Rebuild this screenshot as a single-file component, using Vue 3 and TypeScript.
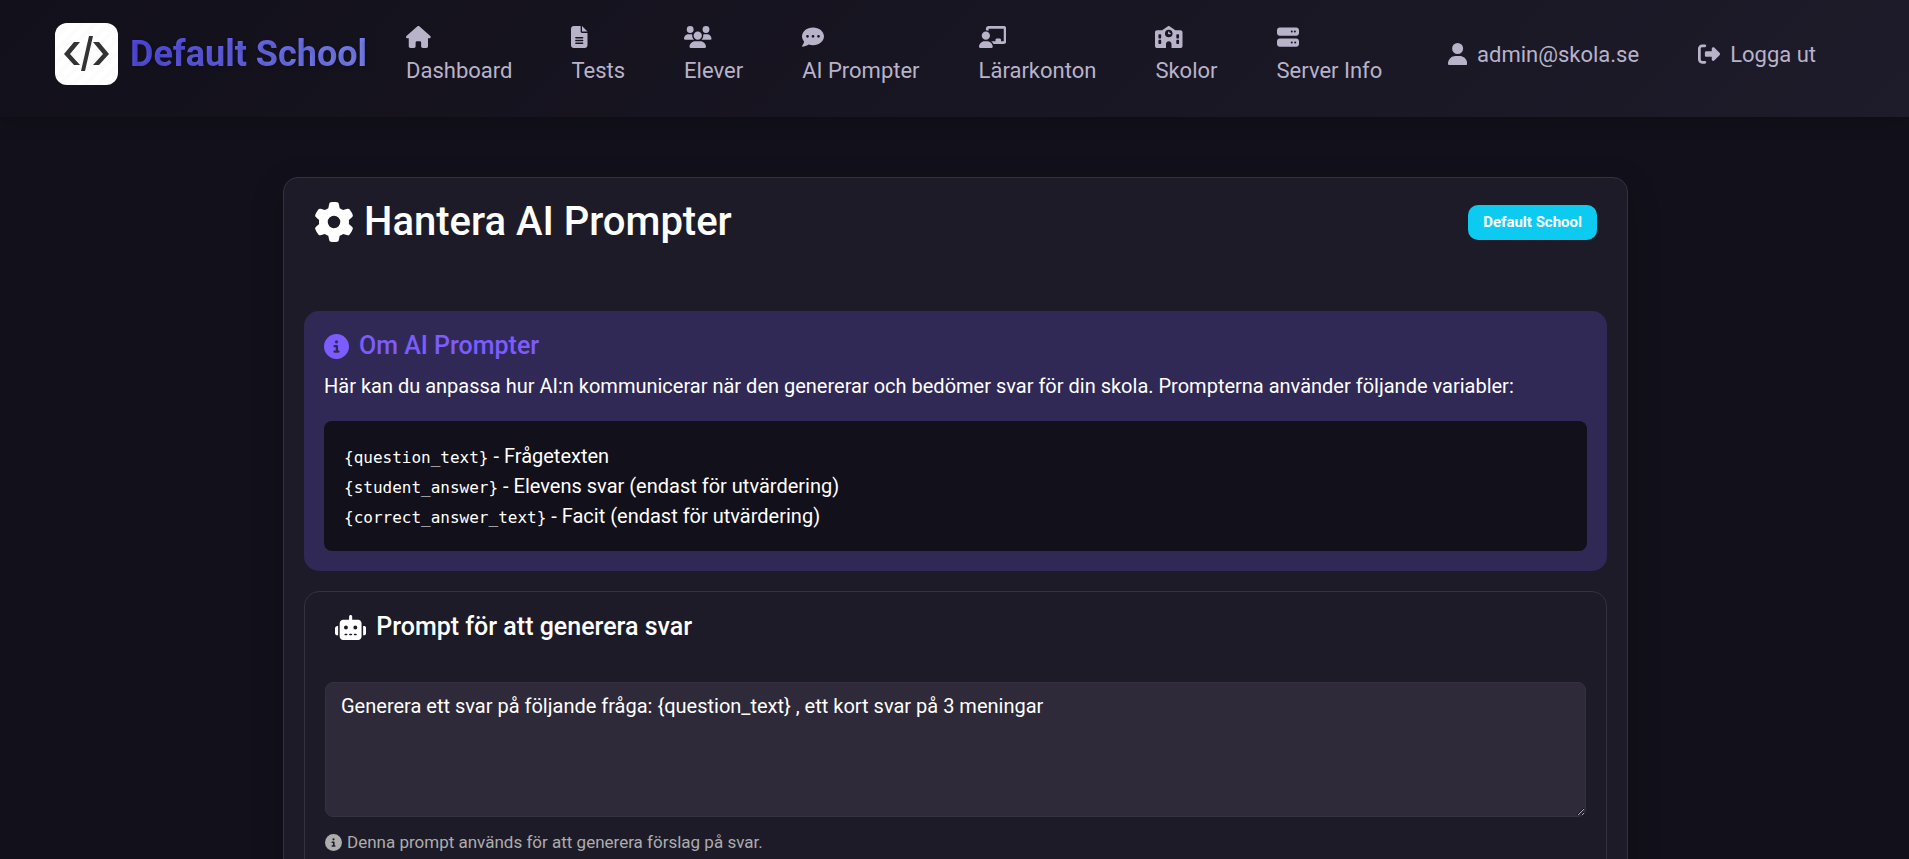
<script setup lang="ts">
import { ref } from 'vue'

interface Icon {
  width: number
  path: string
}

interface NavItem {
  label: string
  icon: Icon
}

interface PromptVariable {
  name: string
  description: string
}

const icons: Record<string, Icon> = {
  house: {
    width: 576,
    path: 'M575.8 255.5c0 18-15 32.1-32 32.1l-32 0 .7 160.2c0 2.7-.2 5.4-.5 8.1l0 16.2c0 22.1-17.9 40-40 40l-16 0c-1.1 0-2.2 0-3.3-.1c-1.4 .1-2.8 .1-4.2 .1L416 512l-24 0c-22.1 0-40-17.9-40-40l0-24 0-64c0-17.7-14.3-32-32-32l-64 0c-17.7 0-32 14.3-32 32l0 64 0 24c0 22.1-17.9 40-40 40l-24 0-31.9 0c-1.5 0-3-.1-4.5-.2c-1.2 .1-2.4 .2-3.6 .2l-16 0c-22.1 0-40-17.9-40-40l0-112c0-.9 0-1.9 .1-2.8l0-69.7-32 0c-18 0-32-14-32-32.1c0-9 3-17 10-24L266.4 8c7-7 15-8 22-8s15 2 21 7L564.8 231.5c8 7 12 15 11 24z',
  },
  file: {
    width: 384,
    path: 'M64 0C28.7 0 0 28.7 0 64L0 448c0 35.3 28.7 64 64 64l256 0c35.3 0 64-28.7 64-64l0-288-128 0c-17.7 0-32-14.3-32-32L224 0 64 0zM256 0l0 128 128 0L256 0zM112 256l160 0c8.8 0 16 7.2 16 16s-7.2 16-16 16l-160 0c-8.8 0-16-7.2-16-16s7.2-16 16-16zm0 64l160 0c8.8 0 16 7.2 16 16s-7.2 16-16 16l-160 0c-8.8 0-16-7.2-16-16s7.2-16 16-16zm0 64l160 0c8.8 0 16 7.2 16 16s-7.2 16-16 16l-160 0c-8.8 0-16-7.2-16-16s7.2-16 16-16z',
  },
  users: {
    width: 640,
    path: 'M144 0a80 80 0 1 1 0 160A80 80 0 1 1 144 0zM512 0a80 80 0 1 1 0 160A80 80 0 1 1 512 0zM0 298.7C0 239.8 47.8 192 106.7 192l42.7 0c15.9 0 31 3.5 44.6 9.7c-1.3 7.2-1.9 14.7-1.9 22.3c0 38.2 16.8 72.5 43.3 96c-.2 0-.4 0-.7 0L21.3 320C9.6 320 0 310.4 0 298.7zM405.3 320c-.2 0-.4 0-.7 0c26.6-23.5 43.3-57.8 43.3-96c0-7.6-.7-15-1.9-22.3c13.6-6.3 28.7-9.7 44.6-9.7l42.7 0C592.2 192 640 239.8 640 298.7c0 11.8-9.6 21.3-21.3 21.3l-213.3 0zM224 224a96 96 0 1 1 192 0 96 96 0 1 1 -192 0zM128 485.3C128 411.7 187.7 352 261.3 352l117.3 0C452.3 352 512 411.7 512 485.3c0 14.7-11.9 26.7-26.7 26.7l-330.7 0c-14.7 0-26.7-11.9-26.7-26.7z',
  },
  comment: {
    width: 512,
    path: 'M256 448c141.4 0 256-93.1 256-208S397.4 32 256 32S0 125.1 0 240c0 45.1 17.7 86.8 47.7 120.9c-1.9 24.5-11.4 46.3-21.4 62.9c-5.5 9.2-11.1 16.6-15.2 21.6c-2.1 2.5-3.7 4.4-4.9 5.7c-.6 .6-1 1.1-1.3 1.4l-.3 .3c-4.6 4.6-5.9 11.4-3.4 17.4c2.5 6 8.3 9.9 14.8 9.9c28.7 0 57.6-8.9 81.6-19.3c22.9-10 42.4-21.9 54.3-30.6c31.8 11.5 67 17.9 104.1 17.9zM128 208a32 32 0 1 1 0 64 32 32 0 1 1 0-64zm128 0a32 32 0 1 1 0 64 32 32 0 1 1 0-64zm96 32a32 32 0 1 1 64 0 32 32 0 1 1 -64 0z',
  },
  teacher: {
    width: 640,
    path: 'M160 64c0-35.3 28.7-64 64-64L576 0c35.3 0 64 28.7 64 64l0 288c0 35.3-28.7 64-64 64l-239.2 0c-11.8-25.5-29.9-47.5-52.4-64l99.6 0 0-32c0-17.7 14.3-32 32-32l64 0c17.7 0 32 14.3 32 32l0 32 64 0 0-288L224 64l0 49.1C205.2 102.2 183.3 96 160 96l0-32zm0 64a96 96 0 1 1 0 192 96 96 0 1 1 0-192zM133.3 352l53.3 0C260.3 352 320 411.7 320 485.3c0 14.7-11.9 26.7-26.7 26.7L26.7 512C11.9 512 0 500.1 0 485.3C0 411.7 59.7 352 133.3 352z',
  },
  school: {
    width: 640,
    path: 'M337.8 5.4C327-1.8 313-1.8 302.2 5.4L166.3 96 48 96C21.5 96 0 117.5 0 144L0 464c0 26.5 21.5 48 48 48l208 0 0-96c0-35.3 28.7-64 64-64s64 28.7 64 64l0 96 208 0c26.5 0 48-21.5 48-48l0-320c0-26.5-21.5-48-48-48L473.7 96 337.8 5.4zM96 192l32 0c8.8 0 16 7.2 16 16l0 64c0 8.8-7.2 16-16 16l-32 0c-8.8 0-16-7.2-16-16l0-64c0-8.8 7.2-16 16-16zm400 16c0-8.8 7.2-16 16-16l32 0c8.8 0 16 7.2 16 16l0 64c0 8.8-7.2 16-16 16l-32 0c-8.8 0-16-7.2-16-16l0-64zM96 320l32 0c8.8 0 16 7.2 16 16l0 64c0 8.8-7.2 16-16 16l-32 0c-8.8 0-16-7.2-16-16l0-64c0-8.8 7.2-16 16-16zm400 16c0-8.8 7.2-16 16-16l32 0c8.8 0 16 7.2 16 16l0 64c0 8.8-7.2 16-16 16l-32 0c-8.8 0-16-7.2-16-16l0-64zM232 176a88 88 0 1 1 176 0 88 88 0 1 1 -176 0zm88-48c-8.8 0-16 7.2-16 16l0 32c0 8.8 7.2 16 16 16l32 0c8.8 0 16-7.2 16-16s-7.2-16-16-16l-16 0 0-16c0-8.8-7.2-16-16-16z',
  },
  server: {
    width: 512,
    path: 'M64 32C28.7 32 0 60.7 0 96l0 64c0 35.3 28.7 64 64 64l384 0c35.3 0 64-28.7 64-64l0-64c0-35.3-28.7-64-64-64L64 32zm280 72a24 24 0 1 1 0 48 24 24 0 1 1 0-48zm48 24a24 24 0 1 1 48 0 24 24 0 1 1 -48 0zM64 288c-35.3 0-64 28.7-64 64l0 64c0 35.3 28.7 64 64 64l384 0c35.3 0 64-28.7 64-64l0-64c0-35.3-28.7-64-64-64L64 288zm280 72a24 24 0 1 1 0 48 24 24 0 1 1 0-48zm56 24a24 24 0 1 1 48 0 24 24 0 1 1 -48 0z',
  },
  user: {
    width: 448,
    path: 'M224 256A128 128 0 1 0 224 0a128 128 0 1 0 0 256zm-45.7 48C79.8 304 0 383.8 0 482.3C0 498.7 13.3 512 29.7 512l388.6 0c16.4 0 29.7-13.3 29.7-29.7C448 383.8 368.2 304 269.7 304l-91.4 0z',
  },
  logout: {
    width: 512,
    path: 'M377.9 105.9L500.7 228.7c7.2 7.2 11.3 17.1 11.3 27.3s-4.1 20.1-11.3 27.3L377.9 406.1c-6.4 6.4-15 9.9-24 9.9c-18.7 0-33.9-15.2-33.9-33.9l0-62.1-128 0c-17.7 0-32-14.3-32-32l0-64c0-17.7 14.3-32 32-32l128 0 0-62.1c0-18.7 15.2-33.9 33.9-33.9c9 0 17.6 3.6 24 9.9zM160 96L96 96c-17.7 0-32 14.3-32 32l0 256c0 17.7 14.3 32 32 32l64 0c17.7 0 32 14.3 32 32s-14.3 32-32 32l-64 0c-53 0-96-43-96-96L0 128C0 75 43 32 96 32l64 0c17.7 0 32 14.3 32 32s-14.3 32-32 32z',
  },
  gear: {
    width: 512,
    path: 'M495.9 166.6c3.2 8.7 .5 18.4-6.4 24.6l-43.3 39.4c1.1 8.3 1.7 16.8 1.7 25.4s-.6 17.1-1.7 25.4l43.3 39.4c6.9 6.2 9.6 15.9 6.4 24.6c-4.4 11.9-9.7 23.3-15.8 34.3l-4.7 8.1c-6.6 11-14 21.4-22.1 31.2c-5.9 7.2-15.7 9.6-24.5 6.8l-55.7-17.7c-13.4 10.3-28.2 18.9-44 25.4l-12.5 57.1c-2 9.1-9 16.3-18.2 17.8c-13.8 2.3-28 3.5-42.5 3.5s-28.7-1.2-42.5-3.5c-9.2-1.5-16.2-8.7-18.2-17.8l-12.5-57.1c-15.8-6.5-30.6-15.1-44-25.4L83.1 425.9c-8.8 2.8-18.6 .3-24.5-6.8c-8.1-9.8-15.5-20.2-22.1-31.2l-4.7-8.1c-6.1-11-11.4-22.4-15.8-34.3c-3.2-8.7-.5-18.4 6.4-24.6l43.3-39.4C64.6 273.1 64 264.6 64 256s.6-17.1 1.7-25.4L22.4 191.2c-6.9-6.2-9.6-15.9-6.4-24.6c4.4-11.9 9.7-23.3 15.8-34.3l4.7-8.1c6.6-11 14-21.4 22.1-31.2c5.9-7.2 15.7-9.6 24.5-6.8l55.7 17.7c13.4-10.3 28.2-18.9 44-25.4l12.5-57.1c2-9.1 9-16.3 18.2-17.8C227.3 1.2 241.5 0 256 0s28.7 1.2 42.5 3.5c9.2 1.5 16.2 8.7 18.2 17.8l12.5 57.1c15.8 6.5 30.6 15.1 44 25.4l55.7-17.7c8.8-2.8 18.6-.3 24.5 6.8c8.1 9.8 15.5 20.2 22.1 31.2l4.7 8.1c6.1 11 11.4 22.4 15.8 34.3zM256 336a80 80 0 1 0 0-160 80 80 0 1 0 0 160z',
  },
  info: {
    width: 512,
    path: 'M256 512A256 256 0 1 0 256 0a256 256 0 1 0 0 512zM216 336l24 0 0-64-24 0c-13.3 0-24-10.7-24-24s10.7-24 24-24l48 0c13.3 0 24 10.7 24 24l0 88 8 0c13.3 0 24 10.7 24 24s-10.7 24-24 24l-80 0c-13.3 0-24-10.7-24-24s10.7-24 24-24zm40-208a32 32 0 1 1 0 64 32 32 0 1 1 0-64z',
  },
  robot: {
    width: 640,
    path: 'M320 0c17.7 0 32 14.3 32 32l0 64 120 0c39.8 0 72 32.2 72 72l0 272c0 39.8-32.2 72-72 72l-304 0c-39.8 0-72-32.2-72-72l0-272c0-39.8 32.2-72 72-72l120 0 0-64c0-17.7 14.3-32 32-32zM208 384c-8.8 0-16 7.2-16 16s7.2 16 16 16l32 0c8.8 0 16-7.2 16-16s-7.2-16-16-16l-32 0zm96 0c-8.8 0-16 7.2-16 16s7.2 16 16 16l32 0c8.8 0 16-7.2 16-16s-7.2-16-16-16l-32 0zm96 0c-8.8 0-16 7.2-16 16s7.2 16 16 16l32 0c8.8 0 16-7.2 16-16s-7.2-16-16-16l-32 0zM264 256a40 40 0 1 0 -80 0 40 40 0 1 0 80 0zm152 40a40 40 0 1 0 0-80 40 40 0 1 0 0 80zM48 224l16 0 0 192-16 0c-26.5 0-48-21.5-48-48l0-96c0-26.5 21.5-48 48-48zm544 0c26.5 0 48 21.5 48 48l0 96c0 26.5-21.5 48-48 48l-16 0 0-192 16 0z',
  },
}

const viewBox = (icon: Icon): string => `0 0 ${icon.width} 512`

const navItems: NavItem[] = [
  { label: 'Dashboard', icon: icons.house },
  { label: 'Tests', icon: icons.file },
  { label: 'Elever', icon: icons.users },
  { label: 'AI Prompter', icon: icons.comment },
  { label: 'Lärarkonton', icon: icons.teacher },
  { label: 'Skolor', icon: icons.school },
  { label: 'Server Info', icon: icons.server },
]

const accountItems: NavItem[] = [
  { label: 'admin@skola.se', icon: icons.user },
  { label: 'Logga ut', icon: icons.logout },
]

const variables: PromptVariable[] = [
  { name: '{question_text}', description: 'Frågetexten' },
  { name: '{student_answer}', description: 'Elevens svar (endast för utvärdering)' },
  { name: '{correct_answer_text}', description: 'Facit (endast för utvärdering)' },
]

const generatePrompt = ref('Generera ett svar på följande fråga: {question_text} , ett kort svar på 3 meningar')
</script>

<template>
  <div class="page">
    <header class="topbar">
      <a class="brand" href="#">
        <svg class="brand-logo" viewBox="0 0 63 62" aria-hidden="true">
          <defs>
            <pattern id="stripes" width="9" height="9" patternUnits="userSpaceOnUse" patternTransform="rotate(45)">
              <rect width="9" height="9" fill="#ffffff" />
              <rect width="4" height="9" fill="#fcfcfc" />
            </pattern>
          </defs>
          <rect width="63" height="62" rx="12" fill="url(#stripes)" />
          <g fill="#333333">
            <path d="M19 19h6L15 31l10 11h-6L9 31z" />
            <path d="M44 19h-6l10 12-10 11h6l10-11z" />
            <path d="M34 13h4L30 48h-4z" />
          </g>
        </svg>
        <span class="brand-name">Default School</span>
      </a>

      <nav class="main-nav" aria-label="Huvudmeny">
        <a v-for="item in navItems" :key="item.label" class="nav-link stacked" href="#">
          <span class="icon-line">
            <svg class="icon" :viewBox="viewBox(item.icon)" aria-hidden="true"><path :d="item.icon.path" /></svg>
          </span>
          <span>{{ item.label }}</span>
        </a>
      </nav>

      <nav class="account-nav" aria-label="Konto">
        <a v-for="item in accountItems" :key="item.label" class="nav-link inline" href="#">
          <svg class="icon" :viewBox="viewBox(item.icon)" aria-hidden="true"><path :d="item.icon.path" /></svg>
          <span>{{ item.label }}</span>
        </a>
      </nav>
    </header>

    <main class="content">
      <section class="card">
        <div class="card-header">
          <h2 class="title">
            <svg class="icon" :viewBox="viewBox(icons.gear)" aria-hidden="true"><path :d="icons.gear.path" /></svg>
            <span>Hantera AI Prompter</span>
          </h2>
          <span class="badge">Default School</span>
        </div>

        <div class="card-body">
          <section class="about">
            <h5 class="heading accent">
              <svg class="icon" :viewBox="viewBox(icons.info)" aria-hidden="true"><path :d="icons.info.path" /></svg>
              <span>Om AI Prompter</span>
            </h5>
            <p class="about-text">
              Här kan du anpassa hur AI:n kommunicerar när den genererar och bedömer svar för din skola. Prompterna
              använder följande variabler:
            </p>
            <ul class="variables">
              <li v-for="variable in variables" :key="variable.name">
                <code>{{ variable.name }}</code> - {{ variable.description }}
              </li>
            </ul>
          </section>

          <section class="prompt">
            <h5 class="heading prompt-header">
              <svg class="icon" :viewBox="viewBox(icons.robot)" aria-hidden="true"><path :d="icons.robot.path" /></svg>
              <label for="generate-prompt">Prompt för att generera svar</label>
            </h5>
            <div class="prompt-body">
              <textarea
                id="generate-prompt"
                v-model="generatePrompt"
                class="prompt-input"
                aria-describedby="generate-hint"
                spellcheck="false"
              ></textarea>
              <p id="generate-hint" class="hint">
                <svg class="icon" :viewBox="viewBox(icons.info)" aria-hidden="true"><path :d="icons.info.path" /></svg>
                <span>Denna prompt används för att generera förslag på svar.</span>
              </p>
            </div>
          </section>
        </div>
      </section>
    </main>
  </div>
</template>

<style>
html,
body {
  height: 100%;
}

body {
  background: #12101a;
  overflow: hidden;
}

#app {
  height: 100%;
}
</style>

<style scoped>
.page {
  height: 100%;
  overflow: hidden;
  color: #ffffff;
  background: #12101a;
  font-family: Roboto, 'Liberation Sans', sans-serif;
  font-size: 20px;
  line-height: 30px;
}

.page *,
.page *::before,
.page *::after {
  box-sizing: border-box;
}

.icon {
  height: 1em;
  fill: currentColor;
  flex: none;
}

.topbar {
  display: flex;
  align-items: center;
  padding: 21px 93px 30px 55px;
  background: linear-gradient(135deg, #12101a 0%, #1e1b2a 100%);
  box-shadow: 0 4px 20px rgba(0, 0, 0, 0.2);
}

.brand {
  display: flex;
  align-items: center;
  gap: 12px;
  margin-right: 39px;
  text-decoration: none;
}

.brand-logo {
  width: 63px;
  height: 62px;
  flex: none;
}

.brand-name {
  font-size: 36px;
  line-height: 54px;
  font-weight: 700;
  white-space: nowrap;
  color: transparent;
  background: linear-gradient(135deg, #4f46e5, #818cf8);
  background-clip: text;
  -webkit-background-clip: text;
  text-shadow: 2px 2px 4px rgba(0, 0, 0, 0.2);
}

.main-nav,
.account-nav {
  display: flex;
  align-items: center;
}

.main-nav {
  gap: 59px;
}

.account-nav {
  gap: 59px;
  margin-left: auto;
}

.nav-link {
  display: flex;
  color: #b8b3c9;
  font-size: 22px;
  line-height: 33px;
  text-decoration: none;
  white-space: nowrap;
}

.stacked {
  flex-direction: column;
}

.inline {
  align-items: center;
  gap: 10px;
}

.icon-line {
  display: flex;
  align-items: flex-start;
  height: 33px;
  padding-top: 5px;
}

.content {
  max-width: 1395px;
  margin: 0 auto;
  padding: 60px 24px 30px 26px;
  box-sizing: border-box;
}

.card,
.prompt {
  background: #1e1b29;
  border: 1px solid #353141;
  border-radius: 15px;
}

.card {
  box-shadow: 0 8px 32px rgba(0, 0, 0, 0.2);
}

.card-header {
  display: flex;
  align-items: center;
  justify-content: space-between;
  padding: 20px 30px;
}

.title {
  display: flex;
  align-items: center;
  gap: 10px;
  margin: 0;
  font-size: 40px;
  line-height: 48px;
  font-weight: 500;
}

.badge {
  padding: 10px 15px;
  border-radius: 10px;
  background: #0dcaf0;
  font-size: 15px;
  line-height: 15px;
  font-weight: 700;
}

.card-body {
  display: flex;
  flex-direction: column;
  gap: 20px;
  padding: 45px 20px 20px;
}

.about {
  padding: 20px;
  border-radius: 15px;
  background: #312955;
}

.heading {
  display: flex;
  align-items: center;
  gap: 10px;
  margin: 0;
  font-size: 25px;
  line-height: 30px;
  font-weight: 500;
}

.accent {
  color: #7c5cff;
}

.about-text {
  margin: 10px 0 20px;
}

.variables {
  margin: 0;
  padding: 20px;
  border-radius: 8px;
  background: #12101a;
  list-style: none;
}

.variables code {
  font-family: 'DejaVu Sans Mono', 'Liberation Mono', monospace;
  font-size: 16px;
  line-height: 20px;
}

.prompt-header {
  padding: 20px 30px;
}

.prompt-body {
  padding: 20px;
}

.prompt-input {
  display: block;
  width: 100%;
  height: 135px;
  padding: 8px 15px;
  border: 1px solid #353141;
  border-radius: 8px;
  background: #2e2a3a;
  color: #ffffff;
  color-scheme: dark;
  font: inherit;
  resize: vertical;
}

.hint {
  display: flex;
  align-items: center;
  gap: 5px;
  margin: 12px 0 0;
  color: #adadad;
  font-size: 17px;
  line-height: 27px;
}
</style>
